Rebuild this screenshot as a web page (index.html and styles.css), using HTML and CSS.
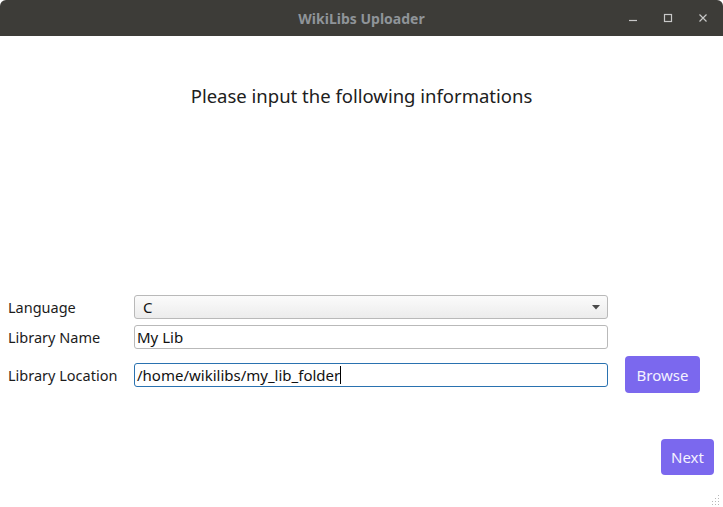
FILE: index.html
```html
<!DOCTYPE html>
<html>
<head>
<meta charset="utf-8">
<link rel="stylesheet" href="styles.css">
</head>
<body>
<div class="window">
  <div class="titlebar">
    <span class="title">WikiLibs Uploader</span>
    <div class="controls">
      <svg class="ctl" width="10" height="10" viewBox="0 0 10 10"><path d="M1 7.5H9" stroke="#c8c8c8" stroke-width="1.2"/></svg>
      <svg class="ctl" width="10" height="10" viewBox="0 0 10 10"><rect x="1.5" y="1.5" width="7" height="7" fill="none" stroke="#c8c8c8" stroke-width="1.2"/></svg>
      <svg class="ctl" width="10" height="10" viewBox="0 0 10 10"><path d="M1.5 1.5L8.5 8.5M8.5 1.5L1.5 8.5" stroke="#c8c8c8" stroke-width="1.2"/></svg>
    </div>
  </div>
  <div class="content">
    <h1 class="heading">Please input the following informations</h1>
    <div class="form">
      <div class="row row-lang">
        <label class="label">Language</label>
        <div class="combo"><span>C</span><svg class="arrow" width="8" height="5" viewBox="0 0 8 5"><path d="M0 0H8L4 4.5Z" fill="#4a4a4a"/></svg></div>
      </div>
      <div class="row row-name">
        <label class="label">Library Name</label>
        <div class="input"><span>My Lib</span></div>
      </div>
      <div class="row row-loc">
        <label class="label">Library Location</label>
        <div class="input focused"><span>/home/wikilibs/my_lib_folder</span><span class="caret"></span></div>
        <button class="btn browse">Browse</button>
      </div>
    </div>
    <div class="footer">
      <button class="btn next">Next</button>
    </div>
    <svg class="grip" width="10" height="10" viewBox="0 0 10 10">
      <g fill="#b8b8b8">
        <rect x="8" y="0" width="1" height="1"/>
        <rect x="5" y="3" width="1" height="1"/><rect x="8" y="3" width="1" height="1"/>
        <rect x="2" y="6" width="1" height="1"/><rect x="5" y="6" width="1" height="1"/><rect x="8" y="6" width="1" height="1"/>
        <rect x="2" y="9" width="1" height="1"/><rect x="5" y="9" width="1" height="1"/><rect x="8" y="9" width="1" height="1"/>
      </g>
    </svg>
  </div>
</div>
</body>
</html>
```
FILE: styles.css
```css
* { box-sizing: border-box; }
html, body { margin: 0; padding: 0; }
body {
  width: 723px;
  height: 507px;
  overflow: hidden;
  background: #ffffff;
  font-family: "Noto Sans", "DejaVu Sans", sans-serif;
  color: #1c1c1c;
}
.window { width: 723px; height: 507px; display: flex; flex-direction: column; }
.titlebar {
  height: 36px;
  background: #3d3c38;
  border-radius: 6px 6px 0 0;
  display: flex;
  align-items: center;
  justify-content: center;
  position: relative;
}
.title {
  font-weight: bold;
  font-size: 14px;
  color: #8f9499;
}
.controls {
  position: absolute;
  right: 15px;
  top: 13px;
  display: flex;
  gap: 25px;
}
.ctl { display: block; }
.content {
  flex: 1;
  position: relative;
  display: flex;
  flex-direction: column;
}
.heading {
  margin: 48px 0 0 0;
  text-align: center;
  font-weight: normal;
  font-size: 18.5px;
  line-height: 24px;
  color: #202020;
}
.form {
  margin-top: 187px;
  display: flex;
  flex-direction: column;
}
.row {
  display: flex;
  align-items: center;
  padding-left: 8px;
}
.row-name { margin-top: 6px; }
.row-loc { margin-top: 7px; }
.label {
  width: 126px;
  font-size: 14.5px;
  color: #1c1c1c;
}
.combo, .input {
  width: 474px;
  height: 24px;
  border: 1px solid #b9b9b9;
  border-radius: 3px;
  display: flex;
  align-items: center;
  padding-left: 2px;
  font-size: 15px;
  color: #111;
}
.combo {
  background: linear-gradient(#fbfbfb, #ececec);
  padding-left: 8px;
  justify-content: space-between;
  padding-right: 7px;
}
.input { background: #fff; }
.input.focused { border-color: #2a72b0; }
.caret { width: 1px; height: 18px; background: #000; margin-left: 0; }
.btn {
  border: none;
  border-radius: 4px;
  background: #7b68ee;
  color: #f4f2ff;
  font-family: inherit;
  font-size: 15px;
  padding: 0;
}
.browse {
  width: 75px;
  height: 37px;
  margin-left: 17px;
}
.footer {
  display: flex;
  justify-content: flex-end;
  padding-right: 9px;
  margin-top: 46px;
}
.next { width: 53px; height: 36px; }
.grip { position: absolute; right: 3px; bottom: 2px; }
```
